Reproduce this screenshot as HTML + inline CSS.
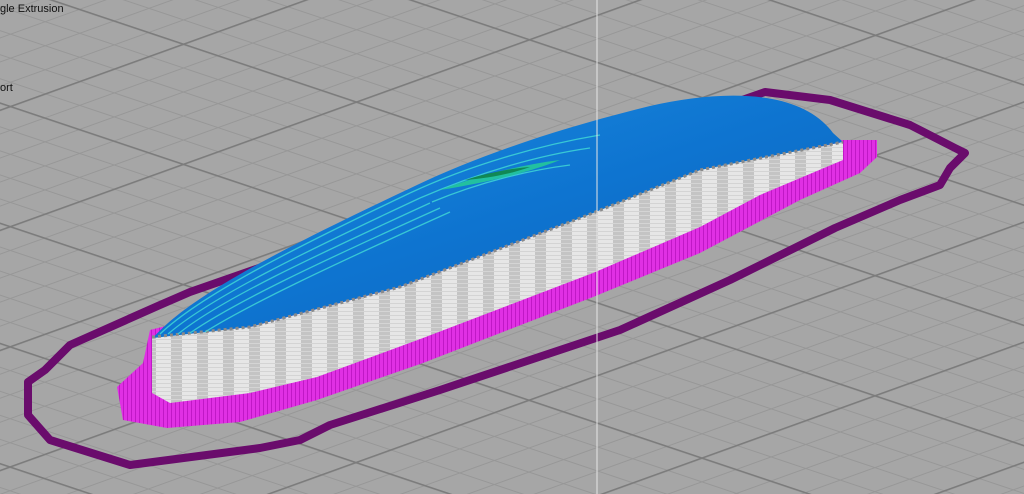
<!DOCTYPE html>
<html><head><style>
html,body{margin:0;padding:0;width:1024px;height:494px;overflow:hidden;background:#a6a6a6;}
svg{position:absolute;left:0;top:0;display:block}
.t{position:absolute;font:11px "Liberation Sans",sans-serif;color:#111;left:0}
</style></head><body>
<svg width="1024" height="494" viewBox="0 0 1024 494">
<defs>
<pattern id="ga" x="875" y="395" width="200" height="22.8" patternUnits="userSpaceOnUse" patternTransform="rotate(18.5 875 395)"><rect width="200" height="1" fill="#979797"/></pattern>
<pattern id="gb" x="875" y="395" width="200" height="22.6" patternUnits="userSpaceOnUse" patternTransform="rotate(-19.8 875 395)"><rect width="200" height="1" fill="#979797"/></pattern>
<pattern id="gA" x="875" y="395" width="200" height="114" patternUnits="userSpaceOnUse" patternTransform="rotate(18.5 875 395)"><rect width="200" height="1.6" fill="#7c7c7c"/></pattern>
<pattern id="gB" x="875" y="395" width="200" height="113" patternUnits="userSpaceOnUse" patternTransform="rotate(-19.8 875 395)"><rect width="200" height="1.6" fill="#7c7c7c"/></pattern>
<linearGradient id="b" x1="0" y1="0" x2="1" y2="1">
<stop offset="0" stop-color="#1e8ee0"/><stop offset="0.5" stop-color="#0e74d0"/><stop offset="1" stop-color="#0b62b8"/>
</linearGradient>
<pattern id="sp" width="26" height="4" patternUnits="userSpaceOnUse"><rect width="26" height="4" fill="#e6e6e6"/><rect x="15" width="11" height="4" fill="#c4c4c4"/><rect y="3" width="26" height="1" fill="#d4d4d4"/></pattern>
<pattern id="mp" width="4" height="4" patternUnits="userSpaceOnUse"><rect width="4" height="4" fill="#e030e4"/><rect x="3" width="1" height="4" fill="#c018c6"/></pattern>
</defs>
<rect width="1024" height="494" fill="url(#ga)"/>
<rect width="1024" height="494" fill="url(#gb)"/>
<rect width="1024" height="494" fill="url(#gA)"/>
<rect width="1024" height="494" fill="url(#gB)"/>
<!-- skirt -->
<path d="M190,292 L765,92 L830,100 L910,125 L955,148 L965,153 L950,168 L940,185 L900,200 L835,228 L730,280 L620,330 L440,390 L330,425 L300,440 L260,448 L130,465 L50,440 L28,415 L28,382 L45,370 L70,345 L160,305 Z" fill="none" stroke="#6a0c6c" stroke-width="8" stroke-linejoin="round"/>
<!-- raft -->
<path d="M117,387 L143,363 L150,330 L700,190 L830,140 L877,140 L877,157 L860,173 L800,200 L700,253 L593,297 L423,363 L317,400 L240,422 L167,428 L123,420 Z" fill="url(#mp)"/>
<!-- supports -->
<path d="M152,337 L250,327 L400,287 L583,217 L700,170 L843,142 L843,160 L760,195 L700,227 L593,273 L423,338 L317,377 L250,393 L170,403 L152,393 Z" fill="url(#sp)"/>
<!-- dome -->
<path d="M153,338 C190,295 290,245 417,185 C480,155 560,128 650,106 C720,90 800,88 833,133 L843,142 L700,170 L583,217 L400,287 L250,327 Z" fill="url(#b)"/>
<path d="M152,337 L250,327 L400,287 L583,217 L700,170 L843,142" fill="none" stroke="#8a8a8a" stroke-width="3" stroke-dasharray="3 3"/>
<g fill="none" stroke="#3fd6d6" stroke-width="1.3" opacity="0.85">
<path d="M160,334 C200,296 290,250 410,193"/>
<path d="M168,334 C210,298 300,254 420,198"/>
<path d="M178,334 C220,300 310,258 430,203"/>
<path d="M190,333 C235,302 320,262 440,208"/>
<path d="M205,332 C250,304 330,266 450,212"/>
<path d="M410,193 C470,165 540,145 600,135"/>
<path d="M420,198 C480,172 540,155 590,148"/>
<path d="M432,202 C480,182 530,170 570,165"/>
</g>
<path d="M440,190 C480,175 520,165 560,160 C530,172 490,182 440,190Z" fill="#22c0a0"/>
<path d="M465,180 C490,172 515,168 530,167 C510,174 490,178 465,180Z" fill="#118855"/>
<line x1="597" y1="0" x2="597" y2="494" stroke="#e6e6e6" stroke-width="1"/>
</svg>
<div class="t" style="top:3px">gle Extrusion</div>
<div class="t" style="top:82px">ort</div>
</body></html>
